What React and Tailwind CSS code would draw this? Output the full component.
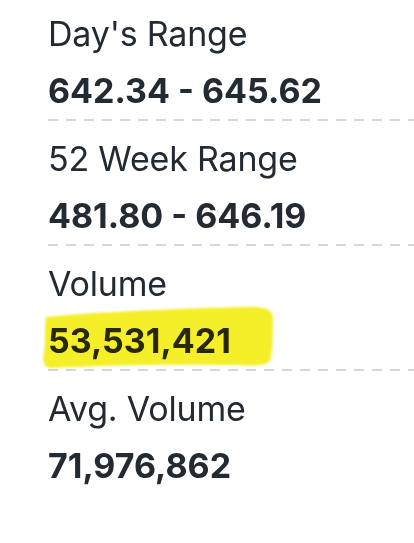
import React from "react";

const rows = [
  { label: "Day's Range", value: "642.34 - 645.62" },
  { label: "52 Week Range", value: "481.80 - 646.19" },
  { label: "Volume", value: "53,531,421", highlight: true },
  { label: "Avg. Volume", value: "71,976,862", last: true },
];

function Highlight() {
  return (
    <svg
      className="absolute left-[-6px] top-[-16px] pointer-events-none"
      width="240"
      height="66"
      viewBox="0 0 240 66"
    >
      <defs>
        <filter id="soft" x="-5%" y="-10%" width="110%" height="120%">
          <feGaussianBlur stdDeviation="0.8" />
        </filter>
      </defs>
      <path
        d="M4 12 C 40 8, 120 4, 200 2 C 222 1, 232 4, 231 14 C 230 28, 232 42, 228 55 C 226 61, 214 61, 190 60 C 130 59, 60 60, 10 63 C 2 63, 0 57, 2 47 C 4 35, 2 22, 4 12 Z"
        fill="#f5ef2a"
        filter="url(#soft)"
      />
    </svg>
  );
}

export default function App() {
  return (
    <div
      className="w-[414px] h-[543px] bg-white overflow-hidden text-[#232a31]"
      style={{ fontFamily: "Inter, 'Noto Sans', sans-serif" }}
    >
      <div className="flex flex-col pl-[48px] pt-[14px]">
        {rows.map((r, i) => (
          <div key={i} className="flex flex-col">
            <div className={i === 0 ? "" : "pt-[18px]"}>
              <div className="h-[40px] leading-[40px] text-[34px] font-normal tracking-[-0.2px] whitespace-nowrap">
                {r.label}
              </div>
              <div className="relative mt-[17px] h-[40px]">
                {r.highlight && <Highlight />}
                <div
                  className={
                    "relative leading-[40px] text-[34px] font-bold whitespace-nowrap " +
                    (r.highlight ? "mix-blend-multiply text-[#2a2a10]" : "")
                  }
                >
                  {r.value}
                </div>
              </div>
            </div>
            {!r.last && (
              <div className="mt-[8px] h-[2px] w-full bg-[repeating-linear-gradient(90deg,#d3d6da_0_10px,transparent_10px_18px)]" />
            )}
          </div>
        ))}
      </div>
    </div>
  );
}
